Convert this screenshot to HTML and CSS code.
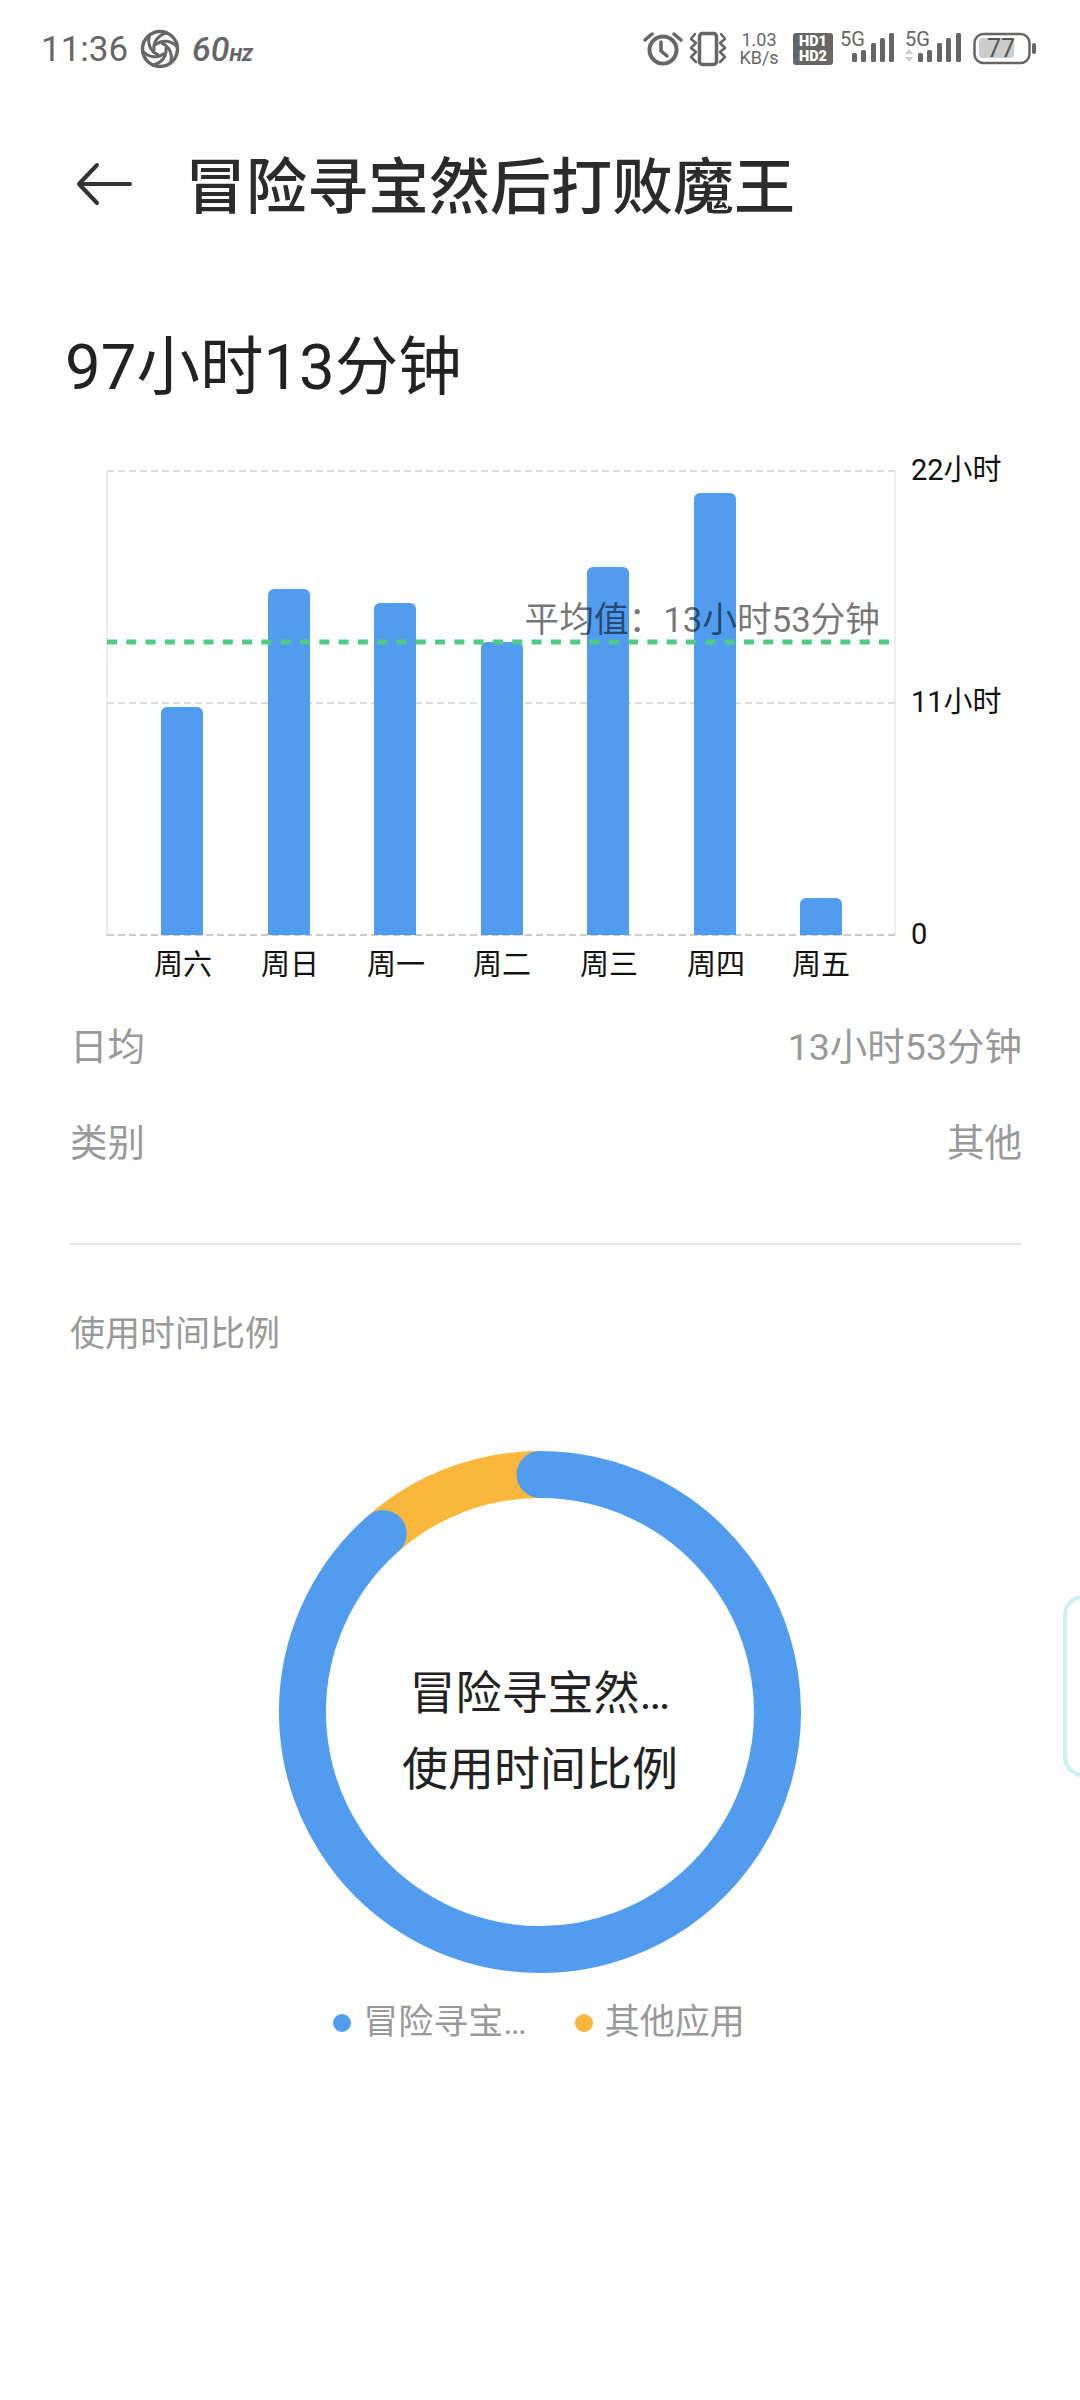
FILE: index.html
```html
<!DOCTYPE html>
<html lang="zh-CN">
<head>
	<meta charset="UTF-8">
	<title>冒险寻宝然后打败魔王</title>
	<link rel="stylesheet" href="styles.css">
</head>
<body>
<main class="page">

	<!-- status bar -->
	<div class="status">
		<div class="status-left">
			<span class="time">11:36</span>
			<svg class="fan" width="40" height="40" viewBox="-20 -20 40 40">
				<circle r="17.5" class="icon-line" stroke-width="3.5"/>
				<g class="icon-line" stroke-width="3">
					<path d="M-6 1C-7 -7 -2 -14 7 -16"/>
					<path d="M-6 1C-7 -7 -2 -14 7 -16" transform="rotate(60)"/>
					<path d="M-6 1C-7 -7 -2 -14 7 -16" transform="rotate(120)"/>
					<path d="M-6 1C-7 -7 -2 -14 7 -16" transform="rotate(180)"/>
					<path d="M-6 1C-7 -7 -2 -14 7 -16" transform="rotate(240)"/>
					<path d="M-6 1C-7 -7 -2 -14 7 -16" transform="rotate(300)"/>
				</g>
			</svg>
			<span class="hz">60<small>HZ</small></span>
		</div>
		<div class="status-right">
			<svg class="alarm" width="40" height="36" viewBox="0 0 40 36">
				<circle cx="20" cy="19" r="13.5" class="icon-line" stroke-width="4"/>
				<path d="M18 11v9l6 5" class="icon-line" stroke-width="3.5"/>
				<path d="M2 9l7-6M38 9l-7-6" class="icon-line" stroke-width="3.5"/>
			</svg>
			<svg class="vibrate" width="38" height="36" viewBox="0 0 38 36">
				<rect x="10.5" y="2.5" width="17" height="31" rx="3" class="icon-line" stroke-width="3.5"/>
				<path d="M6 3L2 8l5 4-5 5 5 4-5 5 5 5" class="icon-line" stroke-width="2.5"/>
				<path d="M32 3l4 5-5 4 5 5-5 4 5 5-5 5" class="icon-line" stroke-width="2.5"/>
			</svg>
			<div class="speed"><span>1.03</span><span>KB/s</span></div>
			<div class="hd"><span>HD1</span><span>HD2</span></div>
			<svg class="sig1" width="54" height="46" viewBox="0 -5 54 46">
				<text x="0" y="14.5" class="sig-text">5G</text>
				<rect x="12" y="22" width="5" height="9" rx="1.5" class="sig-bar"/>
				<rect x="21" y="19" width="5" height="12" rx="1.5" class="sig-bar"/>
				<rect x="31" y="12" width="5" height="19" rx="1.5" class="sig-bar"/>
				<rect x="40" y="7" width="5" height="24" rx="1.5" class="sig-bar"/>
				<rect x="49" y="2" width="5" height="29" rx="1.5" class="sig-bar"/>
			</svg>
			<svg class="sig2" width="56" height="46" viewBox="0 -5 56 46">
				<text x="0" y="14.5" class="sig-text">5G</text>
				<path d="M4 18l4 5H0zM4 31l4-5H0z" fill="#ccc"/>
				<rect x="13" y="22" width="5" height="9" rx="1.5" class="sig-bar"/>
				<rect x="22" y="19" width="5" height="12" rx="1.5" class="sig-bar"/>
				<rect x="32" y="12" width="5" height="19" rx="1.5" class="sig-bar"/>
				<rect x="41" y="7" width="5" height="24" rx="1.5" class="sig-bar"/>
				<rect x="51" y="2" width="5" height="29" rx="1.5" class="sig-bar"/>
			</svg>
			<svg class="battery" width="64" height="36" viewBox="0 0 64 36">
				<rect x="1.5" y="3" width="55" height="29" rx="9" class="icon-line" stroke-width="2.5"/>
				<rect x="6" y="7" width="35" height="20" rx="4" fill="#ccc"/>
				<text x="28" y="26" class="bat-text">77</text>
				<rect x="59" y="12" width="4" height="11" rx="2" fill="#666"/>
			</svg>
		</div>
	</div>

	<!-- title -->
	<header class="topbar">
		<svg class="back" width="56" height="44" viewBox="0 0 56 44">
			<path d="M54 22H3M21 3L3 22l18 19" fill="none" stroke="#333" stroke-width="4" stroke-linecap="round" stroke-linejoin="round"/>
		</svg>
		<h1 class="title">冒险寻宝然后打败魔王</h1>
	</header>

	<h2 class="total">97小时13分钟</h2>

	<!-- weekly chart -->
	<svg class="chart" width="1080" height="540" viewBox="0 450 1080 540">
		<path d="M107 471V935M895 471V935" stroke="#eee" stroke-width="2"/>
		<path d="M107 471H895M107 703H895" stroke="#ddd" stroke-width="2" stroke-dasharray="7 4" fill="none"/>
		<path d="M107 935H895" stroke="#ccc" stroke-width="2" stroke-dasharray="7 4"/>

		<g fill="#519cef">
			<path d="M161 935V713a6 6 0 0 1 6-6h30a6 6 0 0 1 6 6v222z"/>
			<path d="M268 935V595a6 6 0 0 1 6-6h30a6 6 0 0 1 6 6v340z"/>
			<path d="M374 935V609a6 6 0 0 1 6-6h30a6 6 0 0 1 6 6v326z"/>
			<path d="M481 935V648a6 6 0 0 1 6-6h30a6 6 0 0 1 6 6v287z"/>
			<path d="M587 935V573a6 6 0 0 1 6-6h30a6 6 0 0 1 6 6v362z"/>
			<path d="M694 935V499a6 6 0 0 1 6-6h30a6 6 0 0 1 6 6v436z"/>
			<path d="M800 935V904a6 6 0 0 1 6-6h30a6 6 0 0 1 6 6v31z"/>
		</g>

		<path d="M107 642H890" stroke="#4ecb85" stroke-width="5" stroke-dasharray="10 9.3"/>
		<text x="880" y="632" class="avg-label">平均值：13小时53分钟</text>

		<text x="911" y="480" class="axis-label">22小时</text>
		<text x="911" y="712" class="axis-label">11小时</text>
		<text x="911" y="944" class="axis-label">0</text>

		<text x="183" y="975" class="day-label">周六</text>
		<text x="290" y="975" class="day-label">周日</text>
		<text x="396" y="975" class="day-label">周一</text>
		<text x="502" y="975" class="day-label">周二</text>
		<text x="609" y="975" class="day-label">周三</text>
		<text x="716" y="975" class="day-label">周四</text>
		<text x="821" y="975" class="day-label">周五</text>
	</svg>

	<section class="info">
		<div class="info-row"><span>日均</span><span>13小时53分钟</span></div>
		<div class="info-row"><span>类别</span><span>其他</span></div>
	</section>

	<hr class="divider">

	<h3 class="section-title">使用时间比例</h3>

	<!-- usage ratio ring -->
	<div class="ring">
		<svg class="ring-svg" width="524" height="524" viewBox="0 0 524 524">
			<path d="M105.2 83.6A237.5 237.5 0 0 1 262 24.5" fill="none" stroke="#fbb73c" stroke-width="47"/>
			<path d="M262 24.5A237.5 237.5 0 1 1 105.2 83.6" fill="none" stroke="#519cef" stroke-width="47" stroke-linecap="round"/>
		</svg>
		<div class="ring-text">
			<span>冒险寻宝然…</span>
			<span>使用时间比例</span>
		</div>
	</div>

	<div class="legend">
		<span class="legend-item"><i class="dot dot-blue"></i>冒险寻宝…</span>
		<span class="legend-item"><i class="dot dot-orange"></i>其他应用</span>
	</div>

	<!-- edge handle of the side panel -->
	<div class="edge-handle"></div>
</main>
</body>
</html>
```

FILE: styles.css
```css
* {
	box-sizing: border-box;
}

body {
	margin: 0;
	background: #fff;
	font-family: Roboto, "Noto Sans CJK SC", sans-serif;
}

.page {
	position: relative;
	width: 1080px;
	height: 2400px;
	overflow: hidden;
}

/* status bar */
.status {
	display: flex;
	justify-content: space-between;
	align-items: center;
	height: 98px;
	padding: 0 43px 0 41px;
	color: #666;
}

.status-left,
.status-right {
	display: flex;
	align-items: center;
}

.status svg {
	display: block;
}

.time {
	font-size: 35px;
	width: 99px;
	color: #666;
}

.hz {
	margin-left: 12px;
	font-size: 34px;
	font-style: italic;
	font-weight: 500;
}

.hz small {
	font-size: 18px;
	font-weight: 900;
}

.icon-line {
	fill: none;
	stroke: #666;
	stroke-linecap: round;
	stroke-linejoin: round;
}

.vibrate {
	margin-left: 6px;
}

.speed {
	display: flex;
	flex-direction: column;
	align-items: center;
	width: 38px;
	margin-left: 13px;
	font-size: 18px;
	line-height: 18px;
}

.hd {
	display: flex;
	flex-direction: column;
	align-items: center;
	justify-content: center;
	width: 40px;
	height: 32px;
	margin-left: 15px;
	border-radius: 3px;
	background: #666;
	color: #fff;
	font-size: 14.5px;
	line-height: 15px;
	font-weight: 900;
}

.sig1 {
	margin-left: 7px;
}

.sig2 {
	margin-left: 11px;
}

.battery {
	margin-left: 12px;
}

.sig-text {
	font-size: 20px;
	fill: #666;
}

.sig-bar {
	fill: #666;
}

.bat-text {
	font-size: 25px;
	fill: #555;
	text-anchor: middle;
}

/* title */
.topbar {
	display: flex;
	align-items: center;
	height: 174px;
	padding: 0 0 3px 76px;
}

.title {
	margin: 0 0 3px 53px;
	font-size: 61px;
	font-weight: 500;
	color: #2b2b2b;
}

.total {
	margin: 0;
	height: 178px;
	padding: 0 0 0 65px;
	font-size: 63.5px;
	line-height: 192px;
	font-weight: 400;
	color: #222;
}

/* chart */
.chart {
	display: block;
}

.axis-label,
.day-label {
	font-size: 29px;
	fill: #111;
}

.day-label {
	text-anchor: middle;
}

.avg-label {
	font-size: 34.7px;
	fill: rgba(0, 0, 0, .55);
	text-anchor: end;
}

/* info rows */
.info {
	padding: 5px 58px 0 70px;
}

.info-row {
	display: flex;
	justify-content: space-between;
	align-items: center;
	height: 96px;
	font-size: 37.5px;
	color: #999;
}

.divider {
	margin: 56px 58px 0 70px;
	border: 0;
	border-top: 2px solid #e8e8e8;
}

.section-title {
	margin: 0;
	height: 76px;
	padding-left: 70px;
	font-size: 35px;
	line-height: 179px;
	font-weight: 400;
	color: #999;
}

/* ring */
.ring {
	display: grid;
	place-items: center;
	margin-top: 129px;
}

.ring-svg,
.ring-text {
	grid-area: 1 / 1;
}

.ring-svg {
	display: block;
}

.ring-text {
	display: flex;
	flex-direction: column;
	align-items: center;
	gap: 16px;
	padding-top: 37px;
	font-size: 46px;
	line-height: 60px;
	color: #222;
}

/* legend */
.legend {
	display: flex;
	justify-content: center;
	gap: 48px;
	margin-top: 24px;
	padding-right: 2px;
}

.legend-item {
	display: flex;
	align-items: center;
	font-size: 35px;
	line-height: 50px;
	color: #999;
}

.dot {
	width: 18px;
	height: 18px;
	margin-right: 12px;
	border-radius: 50%;
}

.dot-blue {
	background: #519cef;
}

.dot-orange {
	background: #fbb73c;
}

.edge-handle {
	position: absolute;
	left: 1063px;
	top: 1595px;
	width: 40px;
	height: 182px;
	border: 4px solid #cdf1f2;
	border-radius: 30px;
}
```
